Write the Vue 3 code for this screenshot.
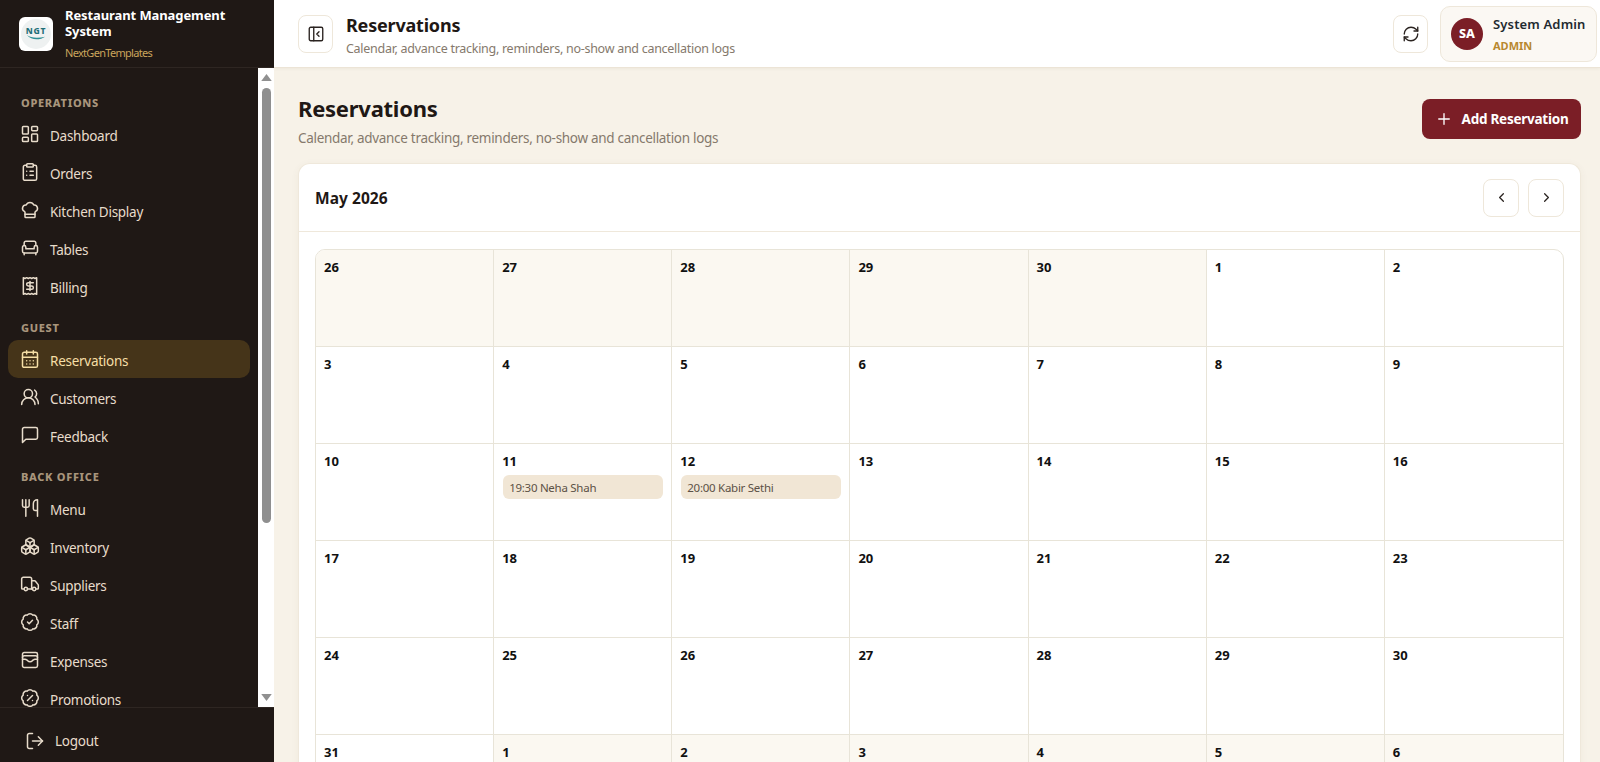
<script setup>
const badge = 'M3.85 8.62a4 4 0 0 1 4.78-4.77 4 4 0 0 1 6.74 0 4 4 0 0 1 4.78 4.78 4 4 0 0 1 0 6.74 4 4 0 0 1-4.77 4.78 4 4 0 0 1-6.75 0 4 4 0 0 1-4.78-4.77 4 4 0 0 1 0-6.76Z'

function p(...ds) {
  return ds.map((d) => `<path d="${d}"/>`).join('')
}

const icons = {
  dashboard: '<rect x="3" y="3" width="7" height="9" rx="1"/><rect x="14" y="3" width="7" height="5" rx="1"/><rect x="14" y="12" width="7" height="9" rx="1"/><rect x="3" y="16" width="7" height="5" rx="1"/>',
  orders: '<rect x="8" y="2" width="8" height="4" rx="1"/>' + p('M16 4h2a2 2 0 0 1 2 2v14a2 2 0 0 1-2 2H6a2 2 0 0 1-2-2V6a2 2 0 0 1 2-2h2', 'M12 11h4', 'M12 16h4', 'M8 11h.01', 'M8 16h.01'),
  kitchen: p('M17 21a1 1 0 0 0 1-1v-5.35c0-.457.316-.844.727-1.041a4 4 0 0 0-2.134-7.589 5 5 0 0 0-9.186 0 4 4 0 0 0-2.134 7.588c.411.198.727.585.727 1.041V20a1 1 0 0 0 1 1Z', 'M6 17h12'),
  tables: p('M19 9V6a2 2 0 0 0-2-2H7a2 2 0 0 0-2 2v3', 'M3 16a2 2 0 0 0 2 2h14a2 2 0 0 0 2-2v-5a2 2 0 0 0-4 0v1.5a.5.5 0 0 1-.5.5h-9a.5.5 0 0 1-.5-.5V11a2 2 0 0 0-4 0z', 'M5 18v2', 'M19 18v2'),
  billing: p('M4 2v20l2-1 2 1 2-1 2 1 2-1 2 1 2-1 2 1V2l-2 1-2-1-2 1-2-1-2 1-2-1-2 1Z', 'M16 8h-6a2 2 0 1 0 0 4h4a2 2 0 1 1 0 4H8', 'M12 17.5v-11'),
  calendar: '<rect x="3" y="4" width="18" height="18" rx="2"/>' + p('M8 2v4', 'M16 2v4', 'M3 10h18', 'M8 14h.01', 'M12 14h.01', 'M16 14h.01', 'M8 18h.01', 'M12 18h.01', 'M16 18h.01'),
  users: '<circle cx="10" cy="8" r="5"/>' + p('M18 21a8 8 0 0 0-16 0', 'M22 20c0-3.37-2-6.5-4-8a5 5 0 0 0-.45-8.3'),
  feedback: p('M21 15a2 2 0 0 1-2 2H7l-4 4V5a2 2 0 0 1 2-2h14a2 2 0 0 1 2 2z'),
  menu: p('M3 2v7c0 1.1.9 2 2 2h4a2 2 0 0 0 2-2V2', 'M7 2v20', 'M21 15V2a5 5 0 0 0-5 5v6c0 1.1.9 2 2 2h3Zm0 0v7'),
  inventory: p('M2.97 12.92A2 2 0 0 0 2 14.63v3.24a2 2 0 0 0 .97 1.71l3 1.8a2 2 0 0 0 2.06 0L12 19v-5.5l-5-3-4.03 2.42Z', 'm7 16.5-4.74-2.85', 'm7 16.5 5-3', 'M7 16.5v5.17', 'M12 13.5V19l3.97 2.38a2 2 0 0 0 2.06 0l3-1.8a2 2 0 0 0 .97-1.71v-3.24a2 2 0 0 0-.97-1.71L17 10.5l-5 3Z', 'm17 16.5-5-3', 'm17 16.5 4.74-2.85', 'M17 16.5v5.17', 'M7.97 4.42A2 2 0 0 0 7 6.13v4.37l5 3 5-3V6.13a2 2 0 0 0-.97-1.71l-3-1.8a2 2 0 0 0-2.06 0l-3 1.8Z', 'M12 8 7.26 5.15', 'm12 8 4.74-2.85', 'M12 13.5V8'),
  suppliers: '<circle cx="17" cy="18" r="2"/><circle cx="7" cy="18" r="2"/>' + p('M14 18V6a2 2 0 0 0-2-2H4a2 2 0 0 0-2 2v11a1 1 0 0 0 1 1h2', 'M15 18H9', 'M19 18h2a1 1 0 0 0 1-1v-3.65a1 1 0 0 0-.22-.624l-3.48-4.35A1 1 0 0 0 17.52 8H14'),
  staff: p(badge, 'm9 12 2 2 4-4'),
  expenses: '<rect x="3" y="3" width="18" height="18" rx="2"/>' + p('M3 9a2 2 0 0 1 2-2h14a2 2 0 0 1 2 2', 'M3 11h3c.8 0 1.6.3 2.1.9l1.1.9c1.6 1.6 4.1 1.6 5.7 0l1.1-.9c.5-.5 1.3-.9 2.1-.9H21'),
  promotions: p(badge, 'm15 9-6 6', 'M9 9h.01', 'M15 15h.01'),
  logout: p('M9 21H5a2 2 0 0 1-2-2V5a2 2 0 0 1 2-2h4', 'm16 17 5-5-5-5', 'M21 12H9'),
  refresh: p('M3 12a9 9 0 0 1 9-9 9.75 9.75 0 0 1 6.74 2.74L21 8', 'M21 3v5h-5', 'M21 12a9 9 0 0 1-9 9 9.75 9.75 0 0 1-6.74-2.74L3 16', 'M8 16H3v5'),
  panel: '<rect x="3" y="3" width="18" height="18" rx="2"/>' + p('M9 3v18', 'm16 15-3-3 3-3'),
  plus: p('M5 12h14', 'M12 5v14'),
  left: p('m15 18-6-6 6-6'),
  right: p('m9 18 6-6-6-6'),
}

const groups = [
  {
    title: 'Operations',
    items: [
      { label: 'Dashboard', icon: 'dashboard' },
      { label: 'Orders', icon: 'orders' },
      { label: 'Kitchen Display', icon: 'kitchen' },
      { label: 'Tables', icon: 'tables' },
      { label: 'Billing', icon: 'billing' },
    ],
  },
  {
    title: 'Guest',
    items: [
      { label: 'Reservations', icon: 'calendar', active: true },
      { label: 'Customers', icon: 'users' },
      { label: 'Feedback', icon: 'feedback' },
    ],
  },
  {
    title: 'Back Office',
    items: [
      { label: 'Menu', icon: 'menu' },
      { label: 'Inventory', icon: 'inventory' },
      { label: 'Suppliers', icon: 'suppliers' },
      { label: 'Staff', icon: 'staff' },
      { label: 'Expenses', icon: 'expenses' },
      { label: 'Promotions', icon: 'promotions' },
    ],
  },
]

// April tail, May, then the start of June
const events = {
  11: '19:30 Neha Shah',
  12: '20:00 Kabir Sethi',
}

const days = []
for (let d = 26; d <= 30; d++) days.push({ n: d, muted: true })
for (let d = 1; d <= 31; d++) days.push({ n: d, event: events[d] })
for (let d = 1; d <= 6; d++) days.push({ n: d, muted: true })
</script>

<template>
  <div class="app">
    <aside class="sidebar">
      <div class="brand">
        <div class="logo">
          <div class="logo-disc">
            <span class="logo-text">NGT</span>
            <svg class="logo-swoosh" viewBox="0 0 24 6"><path d="M1 0c5 4 14 4 22 2-6 4-16 5-22-2z" fill="#2a8f95" /></svg>
          </div>
        </div>
        <div class="brand-copy">
          <div class="brand-name">Restaurant Management System</div>
          <div class="brand-sub">NextGenTemplates</div>
        </div>
      </div>

      <div class="nav-wrap">
        <nav class="nav">
          <div v-for="group in groups" :key="group.title" class="nav-group">
            <div class="nav-title">{{ group.title }}</div>
            <a
              v-for="item in group.items"
              :key="item.label"
              class="nav-item"
              :class="{ active: item.active }"
            >
              <svg class="icon nav-icon" viewBox="0 0 24 24" v-html="icons[item.icon]" />
              <span>{{ item.label }}</span>
            </a>
          </div>
        </nav>
        <!-- drawn by hand, the headless browser hides native scrollbars -->
        <div class="scrollbar">
          <svg class="scroll-arrow" viewBox="0 0 12 8"><path d="M6 0l6 8H0z" /></svg>
          <div class="scroll-thumb"></div>
          <svg class="scroll-arrow bottom" viewBox="0 0 12 8"><path d="M6 8l6-8H0z" /></svg>
        </div>
      </div>

      <div class="sidebar-foot">
        <a class="logout">
          <svg class="icon nav-icon" viewBox="0 0 24 24" v-html="icons.logout" />
          <span>Logout</span>
        </a>
      </div>
    </aside>

    <div class="main">
      <header class="topbar">
        <button class="icon-btn">
          <svg class="icon btn-icon" viewBox="0 0 24 24" v-html="icons.panel" />
        </button>
        <div class="topbar-copy">
          <div class="topbar-title">Reservations</div>
          <div class="topbar-sub">Calendar, advance tracking, reminders, no-show and cancellation logs</div>
        </div>
        <button class="icon-btn refresh">
          <svg class="icon btn-icon" viewBox="0 0 24 24" v-html="icons.refresh" />
        </button>
        <div class="profile">
          <div class="avatar">SA</div>
          <div>
            <div class="profile-name">System Admin</div>
            <div class="profile-role">ADMIN</div>
          </div>
        </div>
      </header>

      <main class="content">
        <div class="page-head">
          <div>
            <h1>Reservations</h1>
            <p>Calendar, advance tracking, reminders, no-show and cancellation logs</p>
          </div>
          <button class="add-btn">
            <svg class="icon plus" viewBox="0 0 24 24" v-html="icons.plus" />
            Add Reservation
          </button>
        </div>

        <section class="card">
          <div class="card-head">
            <div class="month">May 2026</div>
            <div class="pager">
              <button class="icon-btn page-btn">
                <svg class="icon chevron" viewBox="0 0 24 24" v-html="icons.left" />
              </button>
              <button class="icon-btn page-btn">
                <svg class="icon chevron" viewBox="0 0 24 24" v-html="icons.right" />
              </button>
            </div>
          </div>
          <div class="card-body">
            <div class="calendar">
              <div
                v-for="(day, i) in days"
                :key="i"
                class="day"
                :class="{ muted: day.muted }"
              >
                <div class="day-num">{{ day.n }}</div>
                <div v-if="day.event" class="event">{{ day.event }}</div>
              </div>
            </div>
          </div>
        </section>
      </main>
    </div>
  </div>
</template>

<style>
html,
body {
  margin: 0;
  height: 100%;
  overflow: hidden;
}
</style>

<style scoped>
.app {
  display: flex;
  width: 1600px;
  height: 762px;
  overflow: hidden;
  font-family: "Noto Sans", "Open Sans", sans-serif;
  background: #f7f2e8;
}

.icon {
  fill: none;
  stroke: currentColor;
  stroke-width: 2;
  stroke-linecap: round;
  stroke-linejoin: round;
  flex: none;
}

/* Sidebar */
.sidebar {
  width: 274px;
  flex: none;
  display: flex;
  flex-direction: column;
  background: #1f1815;
}

.brand {
  height: 68px;
  box-sizing: border-box;
  flex: none;
  display: flex;
  align-items: center;
  gap: 12px;
  padding: 0 10px 0 19px;
  border-bottom: 1px solid #2e2622;
}

.logo {
  width: 34px;
  height: 34px;
  flex: none;
  display: flex;
  align-items: center;
  justify-content: center;
  background: #fff;
  border-radius: 6px;
}

.logo-disc {
  width: 30px;
  height: 30px;
  border-radius: 50%;
  background: #eef1f1;
  display: flex;
  flex-direction: column;
  align-items: center;
  justify-content: center;
}

.logo-text {
  font-size: 8.5px;
  line-height: 8px;
  font-weight: 800;
  letter-spacing: 0.8px;
  color: #1f6f78;
}

.logo-swoosh {
  width: 24px;
  height: 5px;
}

.brand-name {
  font-size: 13px;
  line-height: 16px;
  font-weight: 700;
  letter-spacing: -0.1px;
  color: #fff;
}

.brand-sub {
  margin-top: 7px;
  font-size: 11px;
  line-height: 14px;
  letter-spacing: -0.7px;
  color: #c9a45c;
}

.nav-wrap {
  flex: 1;
  min-height: 0;
  display: flex;
}

.nav {
  flex: 1;
  min-width: 0;
  overflow: hidden;
  padding: 26px 8px 0;
}

.scrollbar {
  width: 16px;
  flex: none;
  display: flex;
  flex-direction: column;
  align-items: center;
  background: #fff;
}

.scroll-arrow {
  width: 11px;
  height: 7px;
  flex: none;
  margin-top: 6px;
  fill: #909090;
}

.scroll-arrow.bottom {
  margin: auto 0 6px;
}

.scroll-thumb {
  width: 9px;
  height: 435px;
  flex: none;
  margin: 7px 0 0 1px;
  border-radius: 5px;
  background: #8f8f8f;
}

.nav-group {
  margin-bottom: 14px;
}

.nav-title {
  height: 18px;
  margin-bottom: 3px;
  padding-left: 13px;
  font-size: 11px;
  line-height: 18px;
  font-weight: 800;
  letter-spacing: 0.7px;
  text-transform: uppercase;
  color: #a8957c;
}

.nav-item {
  display: flex;
  align-items: center;
  gap: 10px;
  height: 38px;
  padding: 0 12px;
  border-radius: 10px;
  font-size: 13.5px;
  line-height: 14px;
  letter-spacing: -0.27px;
  color: #e8dccb;
}

.nav-item span {
  margin-top: 3px;
}

.nav-item.active {
  background: #453419;
  color: #f6dfa6;
}

.nav-icon {
  width: 20px;
  height: 20px;
  stroke-width: 1.8;
}

.sidebar-foot {
  height: 55px;
  flex: none;
  display: flex;
  align-items: center;
  padding: 11px 0 0 25px;
  border-top: 1px solid #2e2622;
  box-sizing: border-box;
}

.logout {
  display: flex;
  align-items: center;
  gap: 10px;
  font-size: 13.5px;
  letter-spacing: -0.27px;
  color: #e8dccb;
}

/* Topbar */
.main {
  flex: 1;
  min-width: 0;
  display: flex;
  flex-direction: column;
}

.topbar {
  height: 68px;
  flex: none;
  box-sizing: border-box;
  display: flex;
  align-items: center;
  padding: 0 3px 0 24px;
  background: #fff;
  border-bottom: 1px solid #ece4d6;
  box-shadow: 0 1px 3px rgba(90, 70, 40, 0.06);
}

.icon-btn {
  width: 35px;
  height: 38px;
  flex: none;
  padding: 0;
  display: flex;
  align-items: center;
  justify-content: center;
  background: #fff;
  border: 1px solid #eee7da;
  border-radius: 8px;
  color: #2a2320;
}

.btn-icon {
  width: 18px;
  height: 18px;
  stroke-width: 1.8;
}

.topbar-copy {
  flex: 1;
  margin: 2px 0 0 13px;
}

.topbar-title {
  font-size: 18px;
  line-height: 24px;
  font-weight: 700;
  letter-spacing: -0.2px;
  color: #1f1815;
}

.topbar-sub {
  margin-top: 3px;
  font-size: 12.5px;
  line-height: 17px;
  letter-spacing: -0.28px;
  color: #85796c;
}

.refresh {
  margin-right: 12px;
}

.profile {
  width: 157px;
  height: 56px;
  box-sizing: border-box;
  display: flex;
  align-items: center;
  gap: 10px;
  padding: 0 0 0 10px;
  background: #fbf8f3;
  border: 1px solid #eee7da;
  border-radius: 10px;
}

.avatar {
  width: 32px;
  height: 32px;
  flex: none;
  display: flex;
  align-items: center;
  justify-content: center;
  border-radius: 50%;
  background: #7b1e26;
  color: #fff;
  font-size: 12.5px;
  font-weight: 800;
}

.profile-name {
  font-size: 13px;
  line-height: 18px;
  font-weight: 600;
  letter-spacing: 0.15px;
  color: #1f2a30;
  margin-top: 1px;
}

.profile-role {
  margin-top: 6px;
  font-size: 11px;
  line-height: 14px;
  font-weight: 700;
  color: #b8882f;
}

/* Content */
.content {
  flex: 1;
  min-height: 0;
  overflow: hidden;
  padding: 24px 19px 0 24px;
}

.page-head {
  display: flex;
  justify-content: space-between;
  align-items: flex-start;
  margin-bottom: 15px;
  height: 56px;
}

.page-head h1 {
  margin: 0;
  font-size: 22px;
  line-height: 32px;
  font-weight: 700;
  letter-spacing: -0.25px;
  color: #1f1815;
}

.page-head p {
  margin: 5px 0 0;
  font-size: 13.5px;
  line-height: 18px;
  letter-spacing: -0.3px;
  color: #85796c;
}

.add-btn {
  width: 159px;
  height: 40px;
  margin-top: 7px;
  display: flex;
  align-items: center;
  justify-content: center;
  gap: 9px;
  border: 0;
  border-radius: 8px;
  background: #7b1e26;
  color: #fff;
  font-family: inherit;
  font-size: 13.5px;
  font-weight: 700;
  letter-spacing: -0.25px;
}

.plus {
  width: 18px;
  height: 18px;
  stroke-width: 1.8;
}

.card {
  background: #fff;
  border: 1px solid #efe8db;
  border-bottom: 0;
  border-radius: 12px 12px 0 0;
  box-shadow: 0 2px 8px rgba(90, 70, 40, 0.05);
}

.card-head {
  height: 68px;
  box-sizing: border-box;
  display: flex;
  align-items: center;
  justify-content: space-between;
  padding: 0 16px 0 16px;
  border-bottom: 1px solid #efe8db;
}

.month {
  font-size: 15.5px;
  font-weight: 700;
  letter-spacing: 0.05px;
  color: #1f1815;
}

.pager {
  display: flex;
  gap: 9px;
}

.page-btn {
  width: 36px;
  height: 38px;
}

.chevron {
  width: 15px;
  height: 15px;
}

.card-body {
  padding: 17px 16px 0;
}

.calendar {
  display: grid;
  grid-template-columns: repeat(7, 1fr);
  grid-auto-rows: 97px;
  border: 1px solid #e8e4d8;
  border-radius: 10px 10px 0 0;
  overflow: hidden;
}

.day {
  box-sizing: border-box;
  padding: 8px;
  border-right: 1px solid #e8e4d8;
  border-bottom: 1px solid #e8e4d8;
}

.day:nth-child(7n) {
  border-right: 0;
}

.day.muted {
  background: #fbf8f1;
}

.day-num {
  font-size: 13px;
  line-height: 18px;
  font-weight: 700;
  color: #111;
}

.event {
  margin: 5px 0 0 1px;
  height: 24px;
  padding: 0 6px;
  border-radius: 6px;
  background: #f1e6d5;
  font-size: 11.5px;
  line-height: 25px;
  letter-spacing: -0.27px;
  color: #5c5146;
}
</style>
